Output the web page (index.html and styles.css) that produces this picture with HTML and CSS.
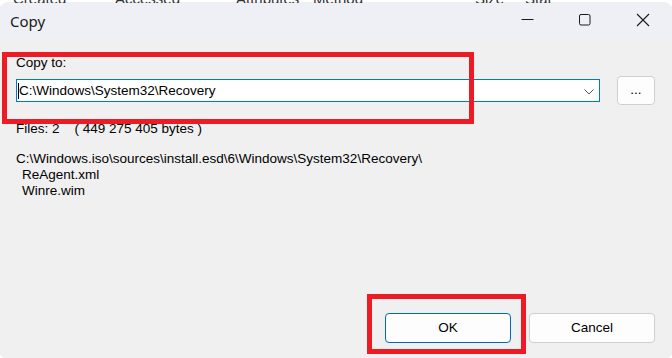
FILE: index.html
```html
<!DOCTYPE html>
<html lang="en">
<head>
    <meta charset="UTF-8">
    <title>Copy</title>
    <link rel="stylesheet" href="styles.css">
</head>
<body>
    <div class="behind">
        <span>Created</span><span>Accessed</span><span>Attributes</span><span>Method</span><span>Size</span><span>Stat</span>
    </div>

    <div class="window">
        <!-- Title bar -->
        <div class="titlebar">
            <span class="title">Copy</span>
            <div class="caption">
                <span class="cap-btn">
                    <svg width="14" height="14" viewBox="0 0 14 14"><path d="M1.5 6.5h12" stroke="#1a1a1a" stroke-width="1"/></svg>
                </span>
                <span class="cap-btn">
                    <svg width="14" height="14" viewBox="0 0 14 14"><rect x="1.5" y="1.5" width="10.5" height="10.5" rx="1.5" fill="none" stroke="#1a1a1a" stroke-width="1"/></svg>
                </span>
                <span class="cap-btn">
                    <svg width="14" height="14" viewBox="0 0 14 14"><path d="M1 1l12 12M13 1L1 13" stroke="#1a1a1a" stroke-width="1.1"/></svg>
                </span>
            </div>
        </div>

        <!-- Dialog body -->
        <div class="content">
            <div class="label">Copy to:</div>
            <div class="path-row">
                <div class="combo">
                    <span class="caret"></span><span class="combo-text">C:\Windows\System32\Recovery</span>
                    <svg class="chevron" width="10" height="6" viewBox="0 0 10 6"><path d="M0.5 0.5l4.5 4.5 4.5-4.5" fill="none" stroke="#555" stroke-width="1"/></svg>
                </div>
                <button class="btn browse">...</button>
            </div>

            <div class="files">Files: 2    ( 449 275 405 bytes )</div>

            <div class="list">
                <div>C:\Windows.iso\sources\install.esd\6\Windows\System32\Recovery\</div>
                <div class="item">ReAgent.xml</div>
                <div class="item">Winre.wim</div>
            </div>

            <div class="actions">
                <button class="btn default">OK</button>
                <button class="btn">Cancel</button>
            </div>
        </div>

        <!-- annotation boxes -->
        <div class="mark mark-path"></div>
        <div class="mark mark-ok"></div>
    </div>
</body>
</html>
```

FILE: styles.css
```css
body {
    margin: 0;
    width: 672px;
    height: 358px;
    overflow: hidden;
    background: #fff;
    font-family: "Liberation Sans", Arial, sans-serif;
    font-size: 13.5px;
    color: #000;
    position: relative;
}

.behind {
    position: absolute;
    top: -10px;
    left: 13px;
    display: flex;
    gap: 0;
    font-size: 15px;
    color: #333;
    white-space: nowrap;
}

.behind span:nth-child(1) { width: 102px; }
.behind span:nth-child(2) { width: 121px; }
.behind span:nth-child(3) { width: 77px; }
.behind span:nth-child(4) { width: 162px; }
.behind span:nth-child(5) { width: 50px; }

.window {
    position: relative;
    margin-top: 3px;
    height: 355px;
    background: #f0f0f0;
    border-radius: 8px;
    overflow: hidden;
    box-shadow: 0 0 0 1px rgba(0, 0, 0, 0.06);
}

.titlebar {
    height: 36px;
    background: #eff0f5;
    display: flex;
    align-items: center;
    justify-content: space-between;
}

.title {
    padding-left: 10px;
    font-family: "Noto Sans", "Open Sans", sans-serif;
    font-size: 15px;
    color: #1a1a1a;
    margin-top: -1px;
}

.caption {
    display: flex;
    height: 100%;
}

.cap-btn {
    width: 58px;
    display: flex;
    align-items: center;
    justify-content: center;
    margin-top: -2px;
}

.content {
    padding: 16px 17px 0 16px;
    display: flex;
    flex-direction: column;
}

.label {
    line-height: 16px;
}

.path-row {
    display: flex;
    align-items: center;
    gap: 17px;
    margin-top: 5px;
}

.combo {
    position: relative;
    width: 581px;
    height: 21px;
    background: #fff;
    border: 1px solid #0078d7;
    display: flex;
    align-items: center;
    padding-left: 1px;
    box-sizing: content-box;
}

.caret {
    width: 1px;
    height: 16px;
    background: #000;
}

.combo-text {
    line-height: 16px;
}

.chevron {
    position: absolute;
    right: 5px;
    top: 9px;
}

.btn {
    font-family: "Liberation Sans", Arial, sans-serif;
    font-size: 13.5px;
    line-height: 16px;
    color: #000;
    background: #fdfdfd;
    border: 1px solid #d0d0d0;
    border-radius: 4px;
    padding: 0;
}

.browse {
    width: 38px;
    height: 29px;
    padding-bottom: 2px;
}

.files {
    margin-top: 16px;
    line-height: 16px;
    white-space: pre;
}

.list {
    margin-top: 14px;
    line-height: 16px;
}

.item {
    padding-left: 6px;
}

.actions {
    display: flex;
    justify-content: flex-end;
    gap: 18px;
    margin-top: 114px;
}

.actions .btn {
    width: 126px;
    height: 30px;
}

.actions .default {
    border-color: #0067c0;
}

.mark {
    position: absolute;
    border: 5px solid #ed1c24;
    box-sizing: border-box;
}

.mark-path {
    left: 2px;
    top: 49px;
    width: 472px;
    height: 72px;
}

.mark-ok {
    left: 367px;
    top: 291px;
    width: 159px;
    height: 60px;
}
```
